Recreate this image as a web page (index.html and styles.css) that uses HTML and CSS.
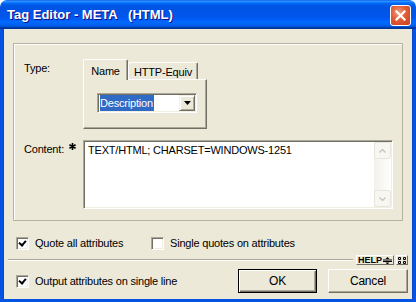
FILE: index.html
```html
<!DOCTYPE html>
<html lang="en">
<head>
  <meta charset="UTF-8" />
  <title>Tag Editor - META (HTML)</title>
  <link rel="stylesheet" href="styles.css">
</head>
<body>
  <div class="window">
    <div class="titlebar">
      <span class="title">Tag Editor - META   (HTML)</span>
      <button class="close" aria-label="Close">
        <svg width="11" height="11" viewBox="0 0 11 11"><path d="M1.5 1.5 L9.5 9.5 M9.5 1.5 L1.5 9.5" stroke="#fff" stroke-width="2.2" stroke-linecap="square"/></svg>
      </button>
    </div>

    <div class="client">
      <div class="group">
        <div class="row">
          <span class="label">Type:</span>
          <div class="tabs">
            <div class="tab-strip">
              <div class="tab active">Name</div>
              <div class="tab tab-equiv">HTTP-Equiv</div>
            </div>
            <div class="tab-panel">
              <div class="select">
                <span class="select-value"><span class="hilite">Description</span></span>
                <span class="select-btn">
                  <svg width="7" height="4" viewBox="0 0 7 4"><path d="M0 0 H7 L3.5 4 Z" fill="#000"/></svg>
                </span>
              </div>
            </div>
          </div>
        </div>

        <div class="row content-row">
          <span class="label">Content:
            <svg class="star" width="7" height="7" viewBox="0 0 7 7"><path d="M3.5 0 V7 M0.4 1.7 L6.6 5.3 M6.6 1.7 L0.4 5.3" stroke="#000" stroke-width="1.6"/></svg>
          </span>
          <div class="textarea">
            <div class="text">TEXT/HTML; CHARSET=WINDOWS-1251</div>
            <div class="scrollbar">
              <span class="sb-btn">
                <svg width="7" height="4" viewBox="0 0 7 4"><path d="M0.5 3.5 L3.5 0.5 L6.5 3.5" fill="none" stroke="#c9c7ba" stroke-width="1.4"/></svg>
              </span>
              <span class="sb-track"></span>
              <span class="sb-btn">
                <svg width="7" height="4" viewBox="0 0 7 4"><path d="M0.5 0.5 L3.5 3.5 L6.5 0.5" fill="none" stroke="#c9c7ba" stroke-width="1.4"/></svg>
              </span>
            </div>
          </div>
        </div>
      </div>

      <div class="checks">
        <label class="check first"><span class="box checked"></span>Quote all attributes</label>
        <label class="check"><span class="box"></span>Single quotes on attributes</label>
      </div>

      <div class="sep-row">
        <div class="sep"></div>
        <button class="mini help"><span>HELP</span>
          <svg width="9" height="7" viewBox="0 0 9 7"><path d="M0 3 H9 M0 4.5 H9" stroke="#000" stroke-width="1"/><path d="M2.5 2 L4.5 0 L6.5 2 Z M2.5 5.5 L4.5 7.5 L6.5 5.5 Z" fill="#000"/></svg>
        </button>
        <button class="mini grid">
          <svg width="8" height="7" viewBox="0 0 8 7"><path d="M0.5 0.5 h2 v2 h-2 Z M5.5 0.5 h2 v2 h-2 Z M0.5 4.5 h2 v2 h-2 Z M5.5 4.5 h2 v2 h-2 Z" fill="none" stroke="#000" stroke-width="1"/></svg>
        </button>
      </div>

      <div class="bottom-row">
        <label class="check"><span class="box checked"></span>Output attributes on single line</label>
        <button class="btn default">OK</button>
        <button class="btn">Cancel</button>
      </div>
    </div>
  </div>
</body>
</html>
```

FILE: styles.css
```css
body {
  margin: 0;
  font-family: 'Liberation Sans', Arial, sans-serif;
  font-size: 11px;
  letter-spacing: -0.2px;
  color: #000;
  background: #fff;
}

button {
  font-family: inherit;
  letter-spacing: inherit;
  padding: 0;
  margin: 0;
}

.window {
  width: 416px;
  height: 302px;
  display: flex;
  flex-direction: column;
}

.titlebar {
  height: 29px;
  flex: none;
  display: flex;
  align-items: flex-start;
  padding: 0 5px 0 7px;
  border-radius: 7px 7px 0 0;
  background: linear-gradient(to bottom, #0058ee 0%, #3593ff 4%, #288eff 6%, #127dff 8%, #036ffc 10%, #0262ee 14%, #0057e5 20%, #0054e3 24%, #0055eb 56%, #005bf5 66%, #026afe 76%, #0062ef 86%, #0052d6 92%, #0040ab 94%, #003092 100%);
}

.title {
  flex: 1;
  margin-top: 7px;
  color: #fff;
  font-weight: bold;
  font-size: 13px;
  letter-spacing: 0;
  line-height: 16px;
  white-space: pre;
  text-shadow: 1px 1px #0f1089;
}

.close {
  width: 21px;
  height: 21px;
  margin-top: 5px;
  border: 1px solid #fff;
  border-radius: 3px;
  display: flex;
  align-items: center;
  justify-content: center;
  background: radial-gradient(circle at 40% 35%, #f0a080 0%, #e25b35 45%, #c8401c 100%);
}

.client {
  flex: 1;
  display: flex;
  flex-direction: column;
  background: #ece9d8;
  border: 3px solid #0553e4;
  border-top: 0;
  box-shadow: inset 1px 0 #0847c8, inset -1px 0 #0847c8;
}

/* group box */
.group {
  box-sizing: border-box;
  width: 390px;
  height: 178px;
  margin: 14px 0 0 10px;
  padding: 15px 0 0 10px;
  border: 1px solid #b7b3a2;
  box-shadow: inset 1px 1px #fff;
}

.row {
  display: flex;
}

.label {
  flex: none;
  width: 59px;
  padding-top: 3px;
  line-height: 13px;
  position: relative;
}

.star {
  position: absolute;
  left: 45px;
  top: 3px;
}

/* tabs */
.tabs {
  display: flex;
  flex-direction: column;
}

.tab-strip {
  display: flex;
  align-items: flex-end;
  height: 20px;
}

.tab {
  box-sizing: border-box;
  height: 17px;
  width: 70px;
  text-align: center;
  padding-top: 3px;
  line-height: 13px;
  border-top: 1px solid #fff;
  border-left: 1px solid #fff;
  border-right: 1px solid #716f64;
  box-shadow: inset -1px 0 #aca899;
  border-radius: 2px 2px 0 0;
}

.tab.active {
  width: 45px;
  height: 21px;
  margin-bottom: -1px;
  padding-top: 5px;
  background: #ece9d8;
  position: relative;
  z-index: 1;
}

.tab-panel {
  box-sizing: border-box;
  width: 124px;
  height: 50px;
  padding: 13px 0 0 13px;
  border: 1px solid;
  border-color: #fff #716f64 #716f64 #fff;
  box-shadow: inset -1px -1px #aca899;
}

.select {
  box-sizing: border-box;
  width: 100px;
  height: 20px;
  display: flex;
  background: #fff;
  border: 1px solid;
  border-color: #aca899 #fff #fff #aca899;
  box-shadow: inset 1px 1px #716f64, inset -1px -1px #f1efe2;
  padding: 1px;
}

.select-value {
  flex: 1;
  padding: 0 0 0 1px;
}

.hilite {
  display: inline-block;
  background: #316ac5;
  color: #fff;
  line-height: 16px;
  padding-right: 1px;
}

.select-btn {
  box-sizing: border-box;
  width: 16px;
  height: 16px;
  display: flex;
  align-items: center;
  justify-content: center;
  background: #ece9d8;
  border: 1px solid;
  border-color: #f1efe2 #716f64 #716f64 #f1efe2;
  box-shadow: inset 1px 1px #fff, inset -1px -1px #aca899;
}

/* content */
.content-row {
  margin-top: 11px;
}

.textarea {
  box-sizing: border-box;
  width: 310px;
  height: 69px;
  display: flex;
  background: #fff;
  border: 1px solid;
  border-color: #aca899 #fff #fff #aca899;
  box-shadow: inset 1px 1px #716f64, inset -1px -1px #f1efe2;
  padding: 1px;
}

.text {
  flex: 1;
  padding: 2px 0 0 3px;
  line-height: 13px;
}

.scrollbar {
  width: 17px;
  display: flex;
  flex-direction: column;
  background: linear-gradient(to right, #f3f1ec, #fefefb);
}

.sb-btn {
  box-sizing: border-box;
  height: 17px;
  display: flex;
  align-items: center;
  justify-content: center;
  border: 1px solid #e8e6dc;
  border-radius: 2px;
  background: #f7f6f0;
}

.sb-track {
  flex: 1;
}

/* checkboxes */
.checks {
  display: flex;
  margin-top: 16px;
  padding-left: 13px;
  height: 13px;
}

.check {
  display: flex;
  align-items: center;
  line-height: 13px;
}

.check.first {
  width: 135px;
}

.box {
  box-sizing: border-box;
  width: 13px;
  height: 13px;
  margin-right: 6px;
  background: #fff;
  border: 1px solid;
  border-color: #aca899 #fff #fff #aca899;
  box-shadow: inset 1px 1px #716f64, inset -1px -1px #f1efe2;
  position: relative;
}

.box.checked::after {
  content: '';
  position: absolute;
  left: 3px;
  top: 1px;
  width: 3px;
  height: 5px;
  border: solid #000;
  border-width: 0 2px 2px 0;
  transform: rotate(40deg);
}

/* separator + help */
.sep-row {
  display: flex;
  align-items: center;
  height: 10px;
  margin-top: 5px;
  padding: 0 5px;
}

.sep {
  flex: 1;
  height: 0;
  border-top: 1px solid #aca899;
  border-bottom: 1px solid #fff;
  margin-right: 3px;
}

.mini {
  box-sizing: border-box;
  height: 10px;
  display: flex;
  align-items: center;
  justify-content: center;
  overflow: hidden;
  background: #ece9d8;
  border: 1px solid;
  border-color: #fff #716f64 #716f64 #fff;
  font-size: 9px;
  font-weight: bold;
  letter-spacing: 0;
  line-height: 8px;
}

.help {
  width: 38px;
  gap: 1px;
}

.grid {
  width: 12px;
  margin-left: 2px;
}

/* bottom row */
.bottom-row {
  display: flex;
  align-items: center;
  height: 24px;
  margin-top: 4px;
  padding: 0 5px 0 13px;
}

.bottom-row .check {
  margin-right: auto;
}

.btn {
  box-sizing: border-box;
  width: 80px;
  height: 24px;
  margin-left: 11px;
  font-size: 12px;
  background: #ece9d8;
  border: 1px solid;
  border-color: #fff #716f64 #716f64 #fff;
  box-shadow: inset -1px -1px #aca899;
}

.btn.default {
  width: 79px;
  border: 1px solid #000;
  box-shadow: inset 1px 1px #fff, inset -1px -1px #716f64, inset -2px -2px #aca899;
}
```
